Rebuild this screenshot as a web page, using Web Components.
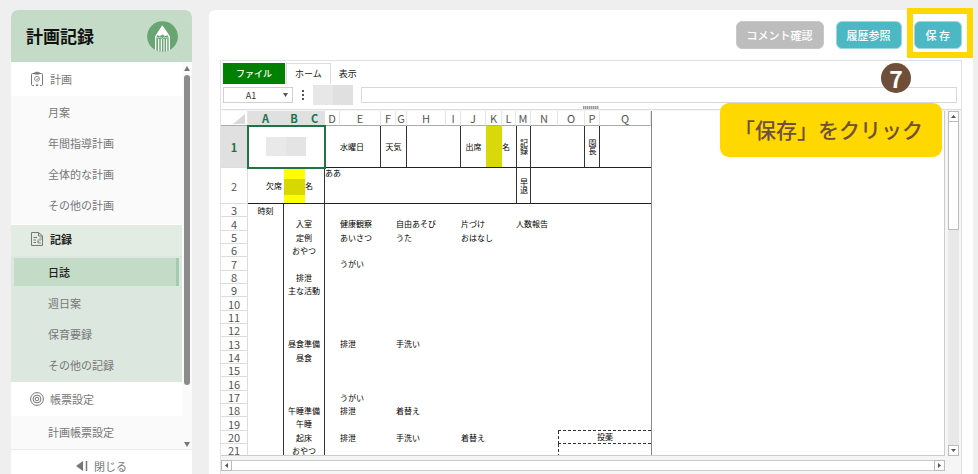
<!DOCTYPE html>
<html lang="ja">
<head>
<meta charset="utf-8">
<title>計画記録</title>
<style>
  body { margin: 0; background: #efefef; font-family: "Noto Sans CJK JP", sans-serif; color: #777; }
</style>
</head>
<body>
<app-shell>
  <side-menu slot="side" heading="計画記録">
    <menu-group label="計画" icon="clipboard">
      <menu-item>月案</menu-item>
      <menu-item>年間指導計画</menu-item>
      <menu-item>全体的な計画</menu-item>
      <menu-item>その他の計画</menu-item>
    </menu-group>
    <menu-group label="記録" icon="document" open>
      <menu-item current>日誌</menu-item>
      <menu-item>週日案</menu-item>
      <menu-item>保育要録</menu-item>
      <menu-item>その他の記録</menu-item>
    </menu-group>
    <menu-group label="帳票設定" icon="target">
      <menu-item>計画帳票設定</menu-item>
    </menu-group>
  </side-menu>
  <action-bar>
    <action-button muted>コメント確認</action-button>
    <action-button>履歴参照</action-button>
    <action-button marked>保 存</action-button>
  </action-bar>
  <sheet-panel></sheet-panel>
  <guide-step slot="guide" number="7">「保存」をクリック</guide-step>
</app-shell>

<script>
const define = (name, render) => customElements.define(name, class extends HTMLElement {
  constructor() { super(); this.attachShadow({ mode: 'open' }); }
  connectedCallback() { this.shadowRoot.innerHTML = '<style>*{box-sizing:border-box}button,input,select{font:inherit;color:inherit;margin:0}</style>' + render(this); }
});

const ICONS = {
  clipboard: `<svg width="14" height="16" viewBox="0 0 14 16" fill="none" stroke="#777"><path d="M4 2.500H2.500Q1.500 2.500 1.500 3.500V13.500Q1.500 14.500 2.500 14.500H4M10 2.500H11.500Q12.500 2.500 12.500 3.500V13.500Q12.500 14.500 11.500 14.500H10"/><path d="M4.500 3V1.800H6L7 .8L8 1.800H9.500V3Z" fill="#777"/><circle cx="7" cy="7.800" r="2.500" stroke-width=".8"/><path d="M6 7.800L7 8.800L8.500 7" stroke-width=".8"/><path d="M5.500 15L7 12.500L8.500 15Z" fill="#777" stroke="none"/></svg>`,
  document: `<svg width="14" height="16" viewBox="0 0 14 16" fill="none" stroke="#777"><path d="M1.500 1.500H8.500L12.500 5V14.500H1.500Z"/><path d="M8.500 1.500V5H12.500M3.500 6.500H7M3.500 9H6M3.500 11.500H6"/><path d="M7.500 11.500L8 9.500L11 6.500L12 7.500L9 10.500Z M8 12H11" stroke-width=".8"/></svg>`,
  target: `<svg width="14" height="16" viewBox="0 0 14 16" fill="none" stroke="#777"><circle cx="7" cy="8" r="6.400"/><circle cx="7" cy="8" r="3.900"/><circle cx="7" cy="8" r="1.800"/></svg>`
};

define('app-shell', () => `<style>
  :host { display: grid; grid-template-columns: 181px minmax(0, 1fr); gap: 17px; height: 100vh; padding: 10px 5px 0 11px; box-sizing: border-box; overflow: hidden; }
  main { position: relative; display: flex; flex-direction: column; min-height: 0; gap: 11px; padding: 11px 11px 0; background: #fff; border-radius: 6px 0 0 0; }
</style><slot name="side"></slot><main><slot></slot><slot name="guide"></slot></main>`);

define('side-menu', el => `<style>
  :host { display: flex; flex-direction: column; min-height: 0; background: #fff; border-radius: 7px 7px 0 0; overflow: hidden; }
  header { display: flex; align-items: center; justify-content: space-between; height: 52px; flex: none; padding: 0 14px 0 15px; background: #c4dbc7; }
  h1 { margin: 0; font-size: 17px; line-height: 24px; font-weight: 700; color: #111; }
  .body { display: flex; flex: 1; min-height: 0; }
  nav { flex: 1; overflow: hidden; }
  .scroll { width: 10px; display: flex; flex-direction: column; align-items: center; gap: 4px; padding: 4px 0 2px; background: #fafafa; }
  .scroll i { width: 6px; height: 310px; border-radius: 3px; background: #8b8b8b; }
  .scroll span { flex: 1; }
  footer { height: 25px; flex: none; padding-top: 6px; border-top: 1px solid #e6ebe6; text-align: center; overflow: hidden; }
  footer button { display: flex; align-items: center; gap: 6px; margin: 0 auto; padding: 0; border: 0; background: none; font-size: 11px; line-height: 22px; }
  footer button { line-height: 20px; }
</style>
<header><h1>${el.getAttribute('heading')}</h1>
<svg width="31" height="31" viewBox="0 0 93 93"><defs><clipPath id="disc"><circle cx="46.500" cy="46.500" r="46"/></clipPath></defs><circle cx="46.500" cy="46.500" r="46" fill="#67a572"/><g clip-path="url(#disc)" fill="none" stroke="#fff" stroke-width="4"><path d="M26 93V47L46 17L67 47V93"/><path d="M46 17L31 40Q39 46 46 38Q53 46 62 40Z" fill="#fff"/><path d="M35 93V54M43 93V54M51 93V54M59 93V54" stroke-width="3.500"/><path d="M27 47Q33 56 39 48Q46 56 53 48Q60 56 66 47" stroke-width="2"/></g></svg></header>
<div class="body"><nav><slot></slot></nav>
<div class="scroll"><svg width="8" height="5" viewBox="0 0 8 5"><path d="M4 0L7 5H1Z" fill="#777"/></svg><i></i><span></span><svg width="8" height="5" viewBox="0 0 8 5"><path d="M1 0H7L4 5Z" fill="#777"/></svg></div></div>
<footer><button type="button"><svg width="12" height="12" viewBox="0 0 12 12"><path d="M7 1V11L0 6Z" fill="#777"/><path d="M10.500 1V11" stroke="#777" stroke-width="1.500"/></svg>閉じる</button></footer>`);

define('menu-group', el => `<style>
  :host { display: block; margin-bottom: 1px; }
  :host([open]) { margin-bottom: 0; }
  button { display: flex; align-items: center; gap: 6px; width: 100%; height: 34px; padding: 0 19px; border: 0; background: #fff; font-size: 11px; line-height: 16px; text-align: left; }
  div { padding: 1px 0 3px; background: #fafafa; }
  :host([open]) button { height: 31px; padding-bottom: 3px; background: #e2ece2; color: #222; font-weight: 700; }
  :host([open]) div { padding: 1px 0; background: #dce7df; }
</style><button type="button">${ICONS[el.getAttribute('icon')]}${el.getAttribute('label')}</button><div><slot></slot></div>`);

define('menu-item', () => `<style>
  :host { display: block; height: 31px; padding: 1px 3px 2px; box-sizing: border-box; }
  a { display: block; padding-left: 34px; font-size: 11px; line-height: 28px; color: inherit; text-decoration: none; }
  :host([current]) a { background: #c4dbc7; border-right: 3px solid #a5cbaf; color: #222; font-weight: 500; }
</style><a href="#"><slot></slot></a>`);

define('action-bar', () => `<style>:host { display: flex; justify-content: flex-end; gap: 12px; }</style><slot></slot>`);

define('action-button', () => `<style>
  :host { display: block; position: relative; }
  button { display: block; height: 28px; padding: 0 10px; border: 1px solid #9fd8df; border-radius: 6px; background: #4bb8c3; color: #fff; font-size: 11px; line-height: 16px; font-weight: 500; }
  :host([muted]) button { background: #bdbdbd; border-color: #c8c8c8; }
  :host([marked]) button { padding: 0 11px; }
  :host([marked])::after { content: ""; position: absolute; inset: -13px -11px -9px -7px; border: 6px solid #ffd800; }
</style><button type="button"><slot></slot></button>`);

define('guide-step', el => `<style>
  :host { position: absolute; top: 53px; right: 31px; display: grid; justify-items: end; gap: 10px; z-index: 2; }
  b { width: 30px; line-height: 30px; margin-right: 31px; border-radius: 50%; background: #704f3a; color: #fff; font-size: 23px; text-align: center; }
  p { margin: 0; padding: 0 19px 2px 14px; border-radius: 9px; background: #ffd800; color: #704f3a; font-size: 21px; line-height: 52px; font-weight: 500; white-space: nowrap; }
</style><b>${el.getAttribute('number')}</b><p><slot></slot></p>`);

define('sheet-panel', () => `<style>
  :host { display: flex; flex-direction: column; flex: 1; min-height: 0; border: 1px solid #e2e2e2; border-bottom: 0; background: #fff; }
  .tabs { display: flex; height: 24px; padding: 2px 2px 1px; font-size: 9px; line-height: 12px; color: #222; }
  .tabs button { padding: 0 8px; border: 0; background: none; }
  .tabs .file { padding: 0 13px; background: #008000; color: #fff; font-weight: 500; }
  .tabs .on { margin-left: 1px; padding: 0 8px; border: 1px solid #ddd; border-bottom: 0; }
  .formula { display: flex; align-items: center; height: 20px; padding: 0 4px 0 2px; }
  .name { position: relative; width: 70px; height: 16px; font-size: 9px; color: #333; }
  select { appearance: none; width: 100%; height: 16px; padding: 0 14px 0 0; border: 1px solid #d0d0d0; border-radius: 0; background: #fff; text-align: center; text-align-last: center; }
  .name svg { position: absolute; right: 5px; top: 6px; }
  .dots { width: 20px; display: flex; justify-content: center; }
  .mask { width: 40px; height: 20px; background: linear-gradient(90deg, #e7e7e7 50%, #e0e0e0 50%); }
  .formula input { flex: 1; min-width: 0; height: 16px; margin-left: 8px; border: 1px solid #d8d8d8; font-size: 9px; }
  .grip { display: flex; justify-content: center; align-items: center; height: 5px; border-bottom: 1px solid #ddd; }
  .grip i { width: 16px; height: 3px; background: repeating-linear-gradient(90deg, #999 0 1px, #ccc 1px 2px); }
  .work { flex: 1; min-height: 0; display: grid; grid-template: minmax(0, 1fr) 11px / minmax(0, 1fr) 11px; gap: 4px 3px; padding: 1px 2px 3px 0; background: #f5f5f5; }
  .view { overflow: hidden; background: #fff; border: solid #ccc; border-width: 0 1px 1px 0; }
  .v, .h { display: flex; background: #e8e8e8; }
  .v { flex-direction: column; }
  .v button, .h button { width: 11px; height: 11px; flex: none; display: grid; place-items: center; padding: 0; border: 1px solid #bbb; background: #fff; }
  .v i { height: 108px; border: 1px solid #bbb; border-top: 0; background: #fff; }
  .h i { flex: 1; border: solid #ccc; border-width: 1px 0; background: #fff; }
  .v span { flex: 1; }
</style>
<div class="tabs"><button class="file" type="button">ファイル</button><button class="on" type="button">ホーム</button><button type="button">表示</button></div>
<div class="formula"><span class="name"><select aria-label="セル"><option>A1</option></select><svg width="5" height="4" viewBox="0 0 5 4"><path d="M0 0H5L2.500 4Z" fill="#555"/></svg></span>
<span class="dots"><svg width="2" height="10" viewBox="0 0 2 10" fill="#555"><path d="M0 0H2V2H0ZM0 4H2V6H0ZM0 8H2V10H0Z"/></svg></span><span class="mask"></span><input type="text" aria-label="数式"></div>
<div class="grip"><i></i></div>
<div class="work"><div class="view"><sheet-grid></sheet-grid></div>
<div class="v"><button type="button" aria-label="上"><svg width="5" height="3" viewBox="0 0 5 3"><path d="M2.500 0L5 3H0Z" fill="#555"/></svg></button><i></i><span></span><button type="button" aria-label="下"><svg width="5" height="3" viewBox="0 0 5 3"><path d="M0 0H5L2.500 3Z" fill="#555"/></svg></button></div>
<div class="h"><button type="button" aria-label="左"><svg width="3" height="5" viewBox="0 0 3 5"><path d="M3 0V5L0 2.500Z" fill="#555"/></svg></button><i></i><button type="button" aria-label="右"><svg width="3" height="5" viewBox="0 0 3 5"><path d="M0 0V5L3 2.500Z" fill="#555"/></svg></button></div></div>`);

/* Column widths, then the schedule rows: row number -> [B:C label, E, G, J, M]. */
const COLS = { A: 36, B: 21, C: 20, D: 15, E: 41, F: 15, G: 11, H: 39, I: 15, J: 25, K: 16, L: 14, M: 15, N: 27, O: 27, P: 15, Q: 51 };
const PLAN = {
  4: ['入室', '健康観察', '自由あそび', '片づけ', '人数報告'],
  5: ['定例', 'あいさつ', 'うた', 'おはなし'],
  6: ['おやつ'],
  7: ['', 'うがい'],
  8: ['排泄'],
  9: ['主な活動'],
  13: ['昼食準備', '排泄', '手洗い'],
  14: ['昼食'],
  17: ['', 'うがい'],
  18: ['午睡準備', '排泄', '着替え'],
  19: ['午睡'],
  20: ['起床', '排泄', '手洗い', '着替え'],
  21: ['おやつ']
};

define('sheet-grid', () => {
  let rows = '';
  for (let n = 3; n <= 21; n++) {
    const [label = '', e = '', g = '', j = '', m = ''] = PLAN[n] || [];
    const tail = n === 20 ? '<td class="d l" colspan="3">投薬</td>'
      : `<td class="${n === 19 ? 'u' : n === 21 ? 'l' : ''}" colspan="3"></td>`;
    rows += `<tr><th scope="row">${n}</th><td class="r c">${n === 3 ? '時刻' : ''}</td><td class="r c" colspan="2">${label}</td><td></td><td colspan="2">${e}</td><td colspan="3">${g}</td><td colspan="3">${j}</td><td colspan="2">${m}</td>${tail}</tr>`;
  }
  return `<style>
  :host { display: block; }
  table { table-layout: fixed; width: 0; border-collapse: separate; border-spacing: 0; border-right: 1px solid #888; font-size: 8px; line-height: 12px; color: #000; }
  th, td { padding: 0; white-space: nowrap; text-align: left; }
  th { font-size: 11px; font-weight: 400; line-height: 12px; color: #555; text-align: center; border: solid #ddd; border-width: 0 1px 1px 0; }
  thead th { height: 15px; border-bottom-color: #aaa; border-right-color: #e6e6e6; }
  .sel { background: #e0e0e0; color: #217346; font-weight: 700; }
  thead .sel { border-color: #e0e0e0; }
  tbody tr { height: 13px; }
  tbody tr:nth-child(3n + 1) { height: 14px; }
  tbody tr.one { height: 42px; }
  tbody tr.two { height: 36px; }
  .one td, .two td { border-bottom: 1px solid #222; }
  .r { border-right: 1px solid #333; }
  .c { text-align: center; }
  .e { text-align: right; padding-right: 2px; }
  .t { vertical-align: top; line-height: 10px; }
  .a1 { outline: 2px solid #217346; outline-offset: -1px; }
  .a1 i { display: block; width: 40px; height: 19px; margin: 0 auto; background: linear-gradient(90deg, #e9e9e9 50%, #e4e4e4 50%); }
  .one .k { background: #d9d90a; }
  .two .k { background: linear-gradient(#ff0 11px, #d8d800 11px 27px, #ff0 27px); }
  .v span { display: inline-block; writing-mode: vertical-rl; line-height: 12px; vertical-align: middle; }
  .d { text-align: center; border-bottom: 1px dashed #333; }
  .l { border-left: 1px dashed #333; }
  .u { border-bottom: 1px dashed #333; }
</style>
<table><colgroup><col style="width:27px">${Object.values(COLS).map(w => `<col style="width:${w}px">`).join('')}</colgroup>
<thead><tr><th aria-label="全選択"><svg width="27" height="13" viewBox="0 0 27 13" display="block"><path d="M24 2V12H12Z" fill="#d8d8d8"/></svg></th>${Object.keys(COLS).map(k => `<th scope="col"${'ABC'.includes(k) ? ' class="sel"' : ''}>${k}</th>`).join('')}</tr></thead>
<tbody><tr class="one"><th class="sel" scope="row">1</th><td class="a1 r" colspan="3"><i></i></td><td></td><td class="r">水曜日</td><td class="r c" colspan="2">天気</td><td class="r" colspan="2"></td><td class="c">出席</td><td class="k"></td><td>名</td><td class="v c r" style="border-left:1px solid #333"><span>記録</span></td><td class="r" colspan="2"></td><td class="v c r"><span>園長</span></td><td></td></tr>
<tr class="two"><th scope="row">2</th><td class="e">欠席</td><td class="k"></td><td class="r">名</td><td class="t" colspan="9">ああ</td><td class="v c r" style="border-left:1px solid #333"><span>早退</span></td><td colspan="4"></td></tr>${rows}</tbody></table>`;
});
</script>
</body>
</html>
